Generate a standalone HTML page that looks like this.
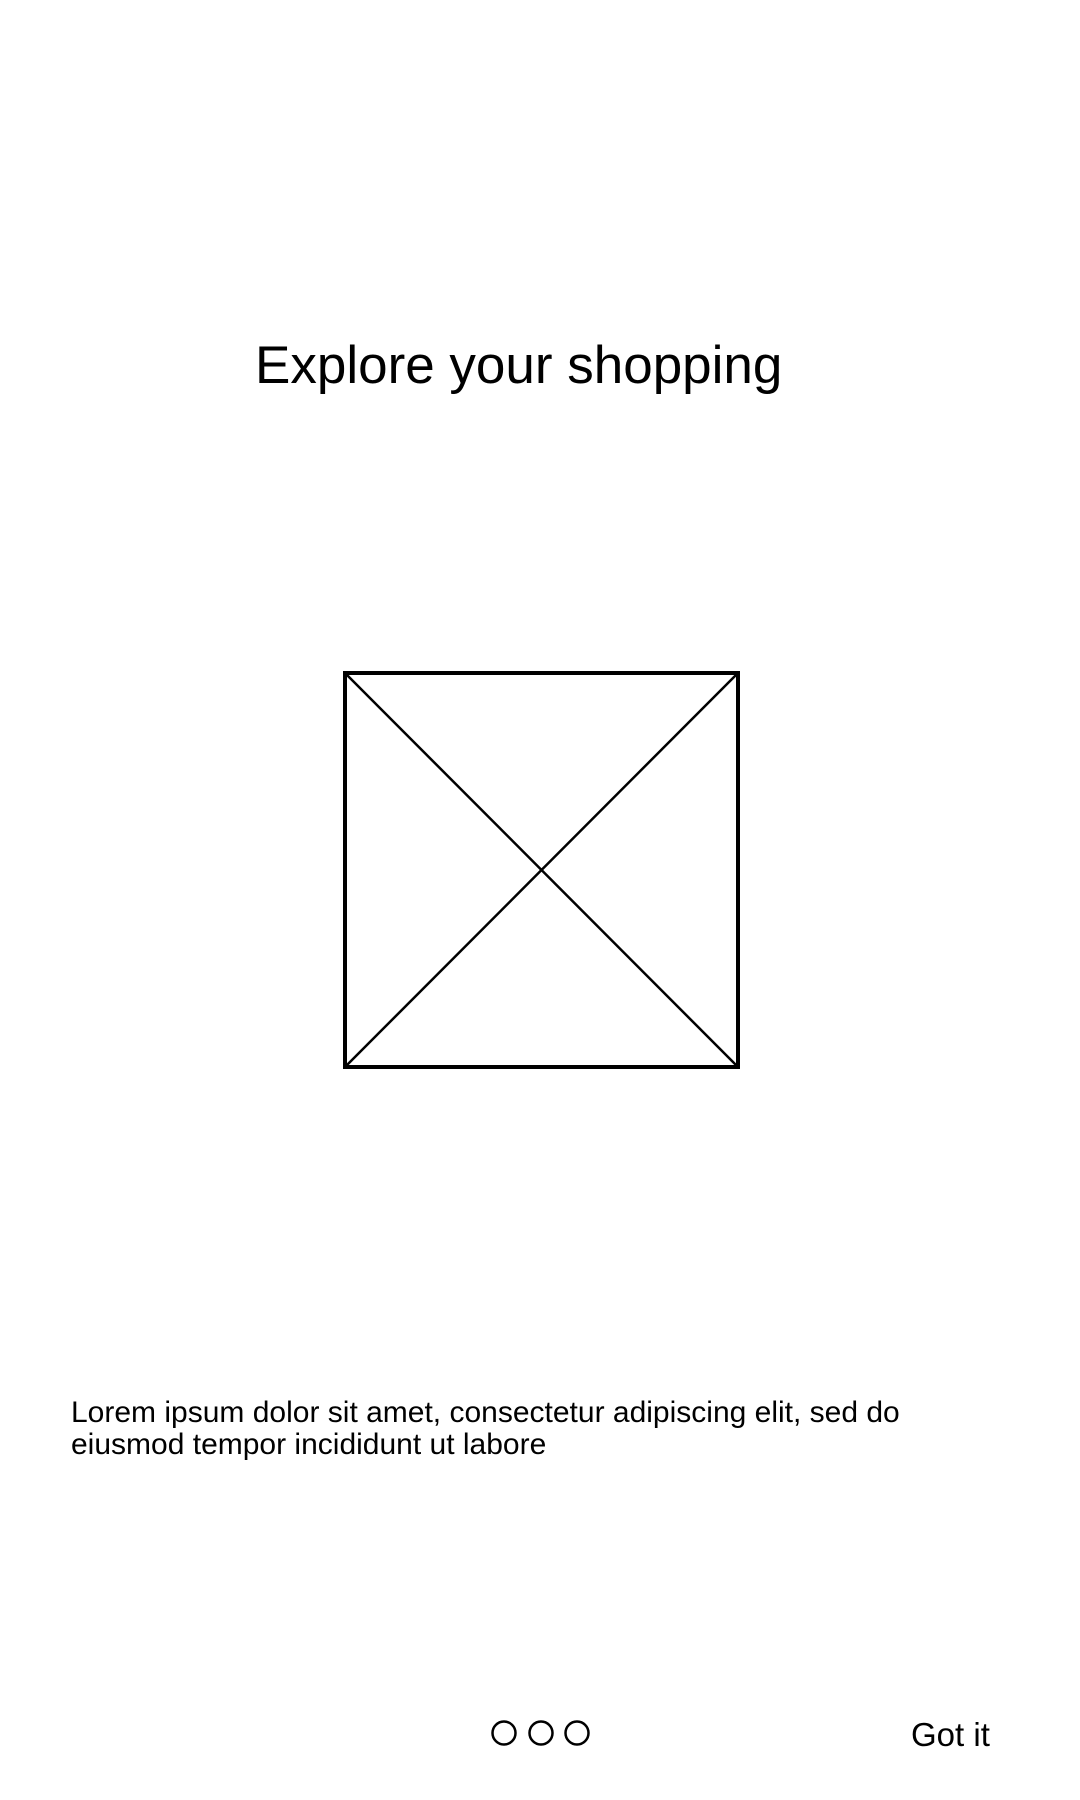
<!DOCTYPE html>
<html><head><meta charset="utf-8"><style>
html,body{margin:0;padding:0;background:#fff;}
body{width:1080px;height:1800px;position:relative;overflow:hidden;font-family:"Liberation Sans",Arial,sans-serif;color:#000;}
.t{position:absolute;white-space:nowrap;}
</style></head><body>
<div class="t" style="left:255px;top:336px;font-size:53px;line-height:60px;">Explore your shopping</div>
<svg style="position:absolute;left:0;top:0" width="1080" height="1800">
<rect x="345" y="673" width="393" height="394" fill="none" stroke="#000" stroke-width="4"/>
<line x1="345" y1="673" x2="738" y2="1067" stroke="#000" stroke-width="2.5"/>
<line x1="738" y1="673" x2="345" y2="1067" stroke="#000" stroke-width="2.5"/>
<circle cx="504" cy="1733" r="11.5" fill="none" stroke="#000" stroke-width="2.5"/>
<circle cx="541" cy="1733" r="11.5" fill="none" stroke="#000" stroke-width="2.5"/>
<circle cx="577" cy="1733" r="11.5" fill="none" stroke="#000" stroke-width="2.5"/>
</svg>
<div class="t" style="left:71px;top:1397px;font-size:30px;line-height:32px;">Lorem ipsum dolor sit amet, consectetur adipiscing elit, sed do<br>eiusmod tempor incididunt ut labore</div>
<div class="t" style="left:911px;top:1716px;font-size:33px;line-height:38px;">Got it</div>
</body></html>
